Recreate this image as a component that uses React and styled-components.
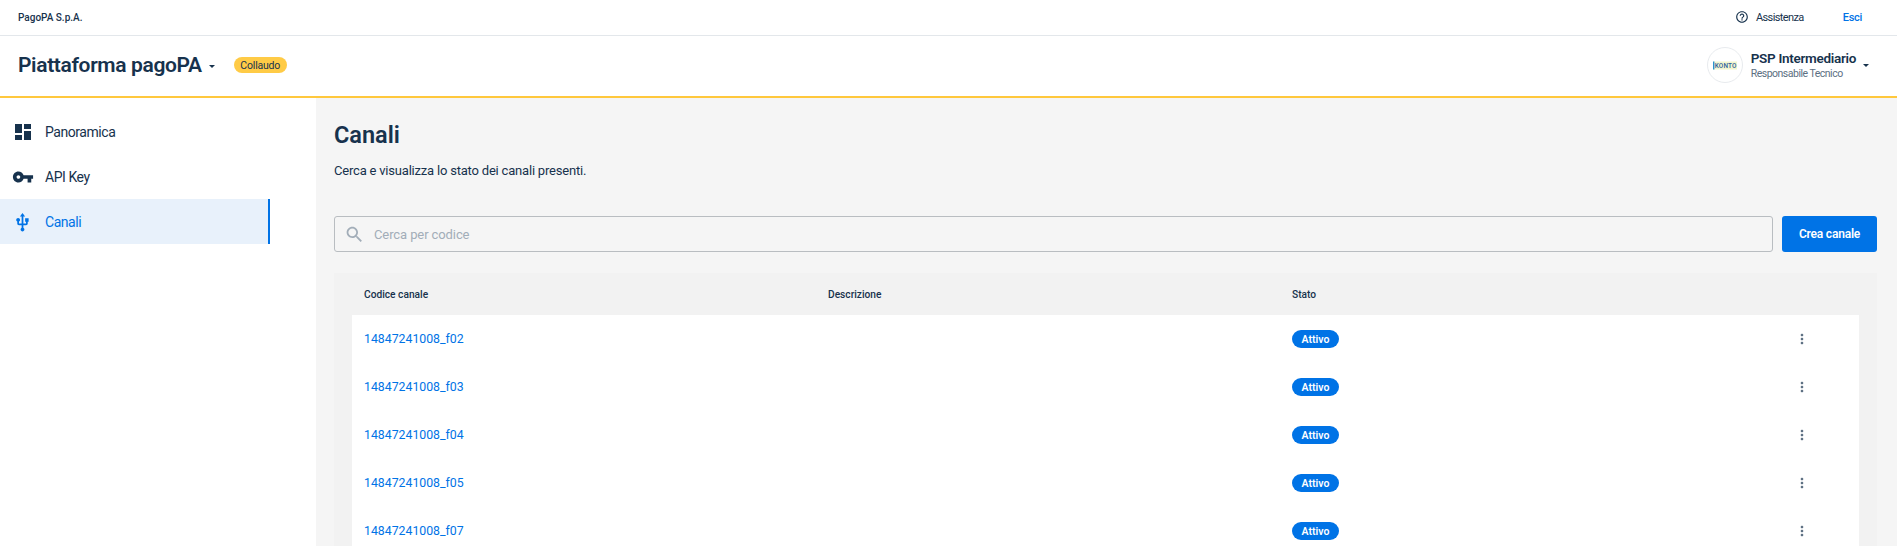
import React from "react";
import styled, { createGlobalStyle } from "styled-components";

const Global = createGlobalStyle`
  html, body { margin: 0; padding: 0; height: 546px; overflow: hidden; background: #fff; }
  body { font-family: Roboto, "Noto Sans", sans-serif; color: #17324d; }
  * { box-sizing: border-box; }
`;
const Page = styled.div`width: 1897px; height: 546px; overflow: hidden; display: flex; flex-direction: column;`;
const TopBar = styled.div`
  height: 36px; flex: none; display: flex; align-items: center; justify-content: space-between;
  padding: 0 35px 1px 18px; border-bottom: 1px solid #e3e7eb; background: #fff;
`;
const Owner = styled.span`font-size: 10px; font-weight: 500; color: #17324d;`;
const TopActions = styled.div`display: flex; align-items: center;`;
const Help = styled.span`display: flex; align-items: center; gap: 7px; font-size: 11px; letter-spacing: -0.6px; color: #17324d;`;
const Logout = styled.span`margin-left: 39px; font-size: 11px; letter-spacing: -0.3px; font-weight: 500; color: #0073e6;`;
const Header = styled.header`
  height: 62px; flex: none; display: flex; align-items: center; justify-content: space-between;
  padding: 0 28px 2px 18px; background: #fff; border-bottom: 2px solid #ffc83d;
`;
const Product = styled.div`display: flex; align-items: center;`;
const ProductName = styled.span`font-size: 21px; font-weight: 600; letter-spacing: -0.35px; color: #17324d;`;
const Caret = styled.span`
  display: block; width: 0; height: 0; border-left: 3.5px solid transparent; border-right: 3.5px solid transparent;
  border-top: 3.5px solid #17324d; margin: ${p => p.$margin};
`;
const EnvChip = styled.span`
  margin-left: 19px; height: 16px; width: 53px; border-radius: 8px; background: #ffcb46; display: flex;
  align-items: center; justify-content: center; font-size: 10.5px; letter-spacing: -0.2px; color: #17324d;
`;
const Party = styled.div`display: flex; align-items: center;`;
const Avatar = styled.div`
  width: 36px; height: 36px; border-radius: 50%; border: 1px solid #e8ebee; background: #fff; flex: none;
  display: flex; align-items: center; justify-content: center; margin-right: 8px;
`;
const PartyText = styled.div`display: flex; flex-direction: column;`;
const PartyName = styled.span`font-size: 13.5px; line-height: 17px; font-weight: 600; letter-spacing: -0.3px; color: #17324d;`;
const PartyRole = styled.span`font-size: 10.5px; line-height: 14px; letter-spacing: -0.5px; color: #5c6f82;`;
const Body = styled.div`flex: 1; display: flex; min-height: 0;`;
const Sidebar = styled.nav`width: 316px; flex: none; background: #fff; padding-top: 11px;`;
const NavItem = styled.div`
  width: 270px; height: 45px; display: flex; align-items: center; padding: 1px 0 0 0;
  background: ${p => p.$active ? "#e8f1fb" : "transparent"};
  border-right: 2px solid ${p => p.$active ? "#0073e6" : "transparent"};
  color: ${p => p.$active ? "#0073e6" : "#17324d"};
`;
const NavIcon = styled.span`width: 45px; flex: none; display: flex; align-items: center; justify-content: center;`;
const NavLabel = styled.span`font-size: 14px; letter-spacing: -0.45px; font-weight: 400;`;
const Main = styled.main`flex: 1; background: #f5f5f5; padding: 21px 20px 0 18px; min-width: 0;`;
const Title = styled.h1`margin: 0; font-size: 23.5px; line-height: 32px; font-weight: 600; color: #17324d;`;
const Subtitle = styled.p`margin: 10px 0 1px; font-size: 13px; line-height: 20px; letter-spacing: -0.2px; color: #17324d;`;
const SearchRow = styled.div`display: flex; gap: 9px; margin-top: 35px;`;
const Search = styled.div`
  flex: 1; height: 36px; border: 1px solid #b9bdc1; border-radius: 3px; background: #f5f5f5;
  display: flex; align-items: center; padding-left: 9px; gap: 9px; color: #a2adb8; font-size: 13px; letter-spacing: -0.1px;
`;
const CreateButton = styled.div`
  width: 95px; height: 36px; border-radius: 3px; background: #0073e6; color: #fff; font-size: 12px; letter-spacing: -0.2px; font-weight: 600;
  display: flex; align-items: center; justify-content: center;
`;
const TableWrap = styled.div`margin-top: 21px; background: #f2f2f2; padding: 0 18px;`;
const Cols = `display: grid; grid-template-columns: 464px 464px 1fr 76px;`;
const HeadRow = styled.div`
  ${Cols} height: 42px; align-items: center; padding-left: 12px; font-size: 10.2px; font-weight: 500; color: #17324d;
`;
const Row = styled.div`
  ${Cols} height: 48px; align-items: center; padding-left: 12px; background: #fff;
`;
const CodeLink = styled.span`font-size: 12.3px; font-weight: 400; color: #0073e6;`;
const Active = styled.span`
  width: 47px; height: 18px; border-radius: 9px; background: #0073e6; color: #fff; font-size: 10.5px; font-weight: 600;
  display: flex; align-items: center; justify-content: center;
`;
const More = styled.span`display: flex; padding-left: 11px;`;

const rows = ["f02", "f03", "f04", "f05", "f07"];

const App = () => (
  <Page>
    <Global />
    <TopBar>
      <Owner>PagoPA S.p.A.</Owner>
      <TopActions>
        <Help>
          <svg width="14" height="14" viewBox="0 0 24 24" fill="#17324d"><path d="M11 18h2v-2h-2v2zm1-16C6.48 2 2 6.48 2 12s4.48 10 10 10 10-4.48 10-10S17.52 2 12 2zm0 18c-4.41 0-8-3.59-8-8s3.59-8 8-8 8 3.59 8 8-3.59 8-8 8zm0-14c-2.21 0-4 1.79-4 4h2c0-1.1.9-2 2-2s2 .9 2 2c0 2-3 1.75-3 5h2c0-2.25 3-2.5 3-5 0-2.21-1.79-4-4-4z"/></svg>
          Assistenza
        </Help>
        <Logout>Esci</Logout>
      </TopActions>
    </TopBar>
    <Header>
      <Product>
        <ProductName>Piattaforma pagoPA</ProductName>
        <Caret $margin="2px 0 0 7px" />
        <EnvChip>Collaudo</EnvChip>
      </Product>
      <Party>
        <Avatar>
          <svg width="24" height="9" viewBox="0 0 24 9">
            <rect x="0" y="0.5" width="24" height="8" fill="#e6ec9c" opacity=".5" />
            <rect x="0" y="0.5" width="1.4" height="8" fill="#2a8fd0" />
            <text x="1.8" y="7" fontSize="6.4" fontFamily="Roboto, sans-serif" fontWeight="500" fill="#2d5f9e" textLength="21.5">KONTO</text>
          </svg>
        </Avatar>
        <PartyText>
          <PartyName>PSP Intermediario</PartyName>
          <PartyRole>Responsabile Tecnico</PartyRole>
        </PartyText>
        <Caret $margin="1px 0 0 7px" />
      </Party>
    </Header>
    <Body>
      <Sidebar>
        <NavItem>
          <NavIcon>
            <svg width="22" height="22" viewBox="0 0 24 24" fill="currentColor" shapeRendering="crispEdges"><path d="M3 13h8V3H3v10zm0 8h8v-6H3v6zm10 0h8V11h-8v10zm0-18v6h8V3h-8z"/></svg>
          </NavIcon>
          <NavLabel>Panoramica</NavLabel>
        </NavItem>
        <NavItem>
          <NavIcon>
            <svg width="22" height="22" viewBox="0 0 24 24" fill="currentColor"><path d="M12.65 10C11.83 7.67 9.61 6 7 6c-3.31 0-6 2.69-6 6s2.69 6 6 6c2.61 0 4.83-1.67 5.65-4H17v4h4v-4h2v-4H12.65zM7 14c-1.1 0-2-.9-2-2s.9-2 2-2 2 .9 2 2-.9 2-2 2z"/></svg>
          </NavIcon>
          <NavLabel>API Key</NavLabel>
        </NavItem>
        <NavItem $active>
          <NavIcon>
            <svg width="21" height="21" viewBox="0 0 24 24" fill="currentColor"><path d="M15 7v4h1v2h-3V5h2l-3-4-3 4h2v8H8v-2.07c.7-.37 1.2-1.08 1.2-1.93 0-1.21-.99-2.2-2.2-2.2-1.21 0-2.2.99-2.2 2.2 0 .85.5 1.56 1.2 1.93V13c0 1.11.89 2 2 2h3v3.05c-.71.37-1.2 1.1-1.2 1.95 0 1.22.99 2.2 2.2 2.2 1.21 0 2.2-.98 2.2-2.2 0-.85-.49-1.58-1.2-1.95V15h3c1.11 0 2-.89 2-2v-2h1V7h-4z"/></svg>
          </NavIcon>
          <NavLabel>Canali</NavLabel>
        </NavItem>
      </Sidebar>
      <Main>
        <Title>Canali</Title>
        <Subtitle>Cerca e visualizza lo stato dei canali presenti.</Subtitle>
        <SearchRow>
          <Search>
            <svg width="21" height="21" viewBox="0 0 24 24" fill="#a2adb8"><path d="M15.5 14h-.79l-.28-.27C15.41 12.59 16 11.11 16 9.5 16 5.91 13.09 3 9.5 3S3 5.91 3 9.5 5.91 16 9.5 16c1.61 0 3.09-.59 4.23-1.57l.27.28v.79l5 4.99L20.49 19l-4.99-5zm-6 0C7.01 14 5 11.99 5 9.5S7.01 5 9.5 5 14 7.01 14 9.5 11.99 14 9.5 14z"/></svg>
            Cerca per codice
          </Search>
          <CreateButton>Crea canale</CreateButton>
        </SearchRow>
        <TableWrap>
          <HeadRow>
            <span>Codice canale</span>
            <span>Descrizione</span>
            <span>Stato</span>
            <span />
          </HeadRow>
          {rows.map(r => (
            <Row key={r}>
              <CodeLink>14847241008_{r}</CodeLink>
              <span />
              <Active>Attivo</Active>
              <More>
                <svg width="16" height="16" viewBox="0 0 24 24" fill="#5c6f82"><path d="M12 8c1.1 0 2-.9 2-2s-.9-2-2-2-2 .9-2 2 .9 2 2 2zm0 2c-1.1 0-2 .9-2 2s.9 2 2 2 2-.9 2-2-.9-2-2-2zm0 6c-1.1 0-2 .9-2 2s.9 2 2 2 2-.9 2-2-.9-2-2-2z"/></svg>
              </More>
            </Row>
          ))}
        </TableWrap>
      </Main>
    </Body>
  </Page>
);
export default App;
